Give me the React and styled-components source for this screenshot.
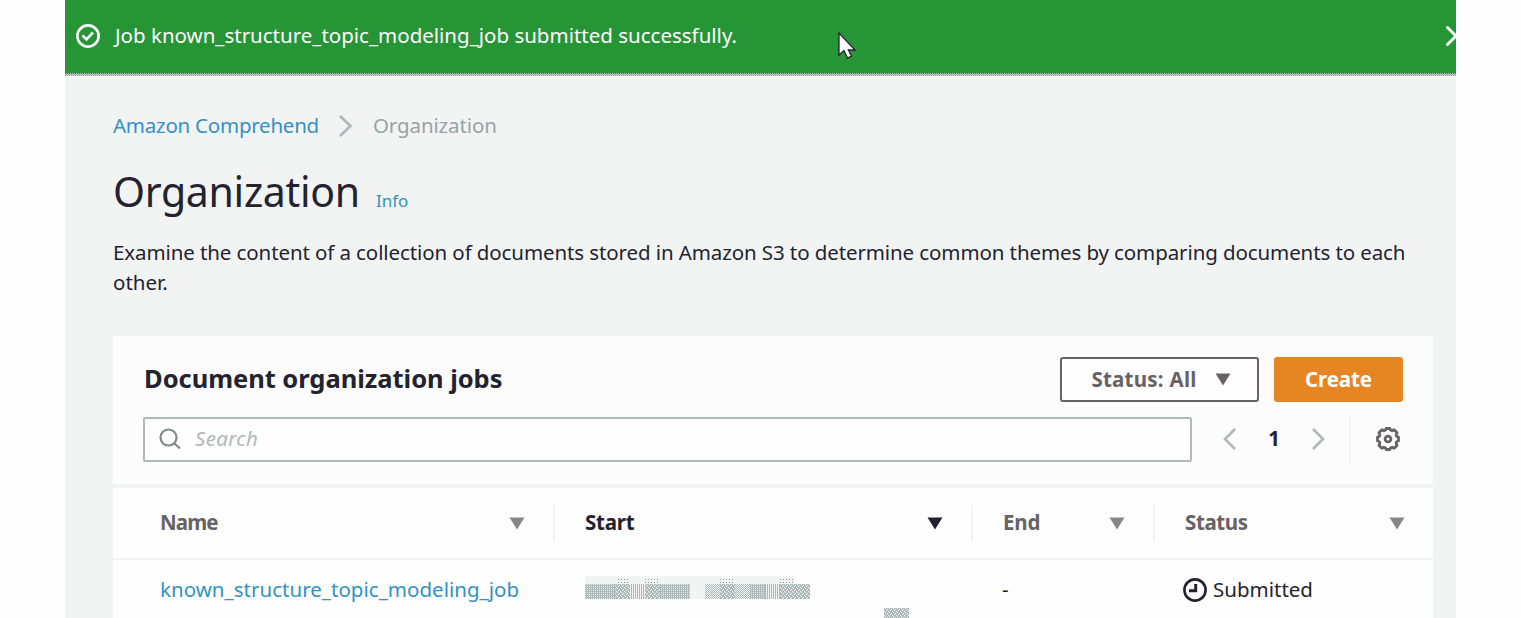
import React from "react";
import styled, { createGlobalStyle, css } from "styled-components";

const ink = "#232330";
const muted = "#686264";
const line = "#aeb9ba";
const pale = "#f2f4f4";
const blue = "#3292c5";

const GlobalStyle = createGlobalStyle`
  * { box-sizing: border-box; }
  html, body { margin: 0; height: 100%; overflow: hidden; background: #fefefe; }
  body {
    font-family: "Noto Sans", "Open Sans", sans-serif;
    font-size: 20.5px;
    line-height: 30px;
    color: ${ink};
  }
`;

const Shell = styled.div`
  width: 1391px;
  height: 618px;
  margin-left: 65px;
  overflow: hidden;
  background: ${pale};
`;

const Text = styled.span`
  display: block;
  white-space: nowrap;
  margin-bottom: ${(p) => p.$lift || 0}px;
  font-size: ${(p) => p.$size || 20.5}px;
  letter-spacing: ${(p) => p.$track || 0}px;
  color: ${(p) => p.$color || "inherit"};
  font-weight: ${(p) => p.$weight || 400};
  font-style: ${(p) => (p.$italic ? "italic" : "normal")};
`;

const Flash = styled.header`
  display: flex;
  align-items: center;
  height: 73px;
  padding-left: 11px;
  background: #269536;
  color: #fff;
  overflow: hidden;
  svg { flex: none; }
`;

const FlashMessage = styled.div`
  margin: -3px auto 0 15px;
`;

const FlashIcon = styled.svg`
  margin-top: -1px;
`;

const FlashClose = styled.svg`
  margin: -1px -11px 0 0;
`;

const FlashEdge = styled.div`
  height: 3px;
  background:
    linear-gradient(transparent 0 1px, ${line} 1px 2px, transparent 2px),
    linear-gradient(transparent 0 2px, rgba(242, 244, 244, 0.45) 2px),
    repeating-linear-gradient(90deg, #686264 0 1px, ${line} 1px 2px);
`;

const Pointer = styled.svg`
  position: absolute;
  left: 838px;
  top: 32px;
`;

const Page = styled.main`
  display: flex;
  flex-direction: column;
  padding: 35px 23px 0 48px;
`;

const Breadcrumbs = styled.nav`
  display: flex;
  align-items: center;
  height: 30px;
`;

const CrumbArrow = styled.svg`
  margin: 0 20px 0 19px;
`;

const TitleRow = styled.div`
  display: flex;
  align-items: baseline;
  gap: 16px;
  height: 62px;
  margin-top: 19px;
`;

const Title = styled.h1`
  margin: 0;
  font-weight: 400;
  line-height: 62px;
`;

const Description = styled.div`
  height: 114px;
  padding-top: 15px;
`;

const Panel = styled.section`
  display: flex;
  flex-direction: column;
`;

const PanelHeader = styled.div`
  height: 148px;
  padding: 21px 30px 0;
  background: #fcfcfc;
`;

const HeadRow = styled.div`
  display: flex;
  align-items: center;
  height: 45px;
  gap: 15px;
`;

const Heading = styled.h2`
  margin: 0 auto 0 1px;
`;

const Button = styled.button`
  display: flex;
  align-items: center;
  justify-content: center;
  gap: 18px;
  width: ${(p) => (p.$primary ? 129 : 199)}px;
  height: 45px;
  padding: 0 0 1px;
  font: inherit;
  border-radius: 3px;
  ${(p) =>
    p.$primary
      ? css`
          border: 0;
          background: #e58623;
          color: #fff;
        `
      : css`
          padding-left: 3px;
          border: 2px solid ${muted};
          background: #fefefe;
          color: ${muted};
        `}
`;

const FilterRow = styled.div`
  display: flex;
  align-items: center;
  height: 45px;
  margin-top: 15px;
`;

const SearchBox = styled.div`
  display: flex;
  align-items: center;
  gap: 14px;
  width: 1049px;
  height: 45px;
  padding: 0 0 2px 14px;
  border: 2px solid ${line};
  border-radius: 2px;
  background: #fefefe;
`;

const Pager = styled.div`
  display: flex;
  align-items: center;
  justify-content: space-between;
  width: 104px;
  height: 43px;
  margin: 0 0 2px 30px;
`;

const Rule = styled.div`
  width: 2px;
  height: ${(p) => p.$h}px;
  margin-left: ${(p) => p.$left || 0}px;
  background: ${pale};
`;

const GearIcon = styled.svg`
  margin: 0 0 2px 24px;
`;

const Table = styled.div`
  margin-top: 4px;
  background: #fefefe;
`;

const Row = styled.div`
  display: grid;
  grid-template-columns: 442px 418px 182px 278px;
  align-items: center;
  height: ${(p) => (p.$head ? 72 : 60)}px;
  border-bottom: ${(p) => (p.$head ? `2px solid ${pale}` : "0")};
`;

const HeadCell = styled.div`
  display: flex;
  align-items: center;
  justify-content: space-between;
  height: 36px;
  padding-left: ${(p) => p.$left}px;
  padding-right: ${(p) => p.$right}px;
  border-right: ${(p) => (p.$last ? "0" : `2px solid ${pale}`)};
`;

const Cell = styled.div`
  display: flex;
  align-items: center;
  gap: 6px;
  height: 60px;
  padding-left: ${(p) => p.$left}px;
`;

const Redacted = styled.svg`
  display: block;
  align-self: flex-start;
  margin-top: 16px;
`;

const Chevron = ({ flip }) => (
  <svg width="15" height="24" viewBox="0 0 15 24" fill="none" stroke={line} strokeWidth="2.6">
    <path d={flip ? "M13 2 3 12 13 22" : "M2 2 12 12 2 22"} />
  </svg>
);

const Caret = ({ color = "#858889" }) => (
  <svg width="16" height="13" viewBox="0 0 16 13" fill={color}>
    <path d="M.5.5h15L8 12.5z" />
  </svg>
);

const columns = [
  { label: "Name", left: 47, right: 28, track: -0.9 },
  { label: "Start", left: 30, right: 28, track: -0.2, sorted: true },
  { label: "End", left: 30, right: 28, track: -0.2 },
  { label: "Status", left: 30, right: 28, track: -0.4, last: true },
];

const maskBlocks = [
  [0, 8, 30, "a"], [30, 8, 15, "b"], [45, 8, 15, "s"], [60, 8, 15, "b"], [75, 8, 30, "a"],
  [120, 8, 15, "c"], [135, 8, 15, "b"], [150, 8, 15, "c"], [165, 8, 15, "a"],
  [180, 8, 15, "s"], [195, 8, 30, "b"],
];

const MaskedDate = () => (
  <Redacted width="325" height="42" viewBox="0 0 325 42" shapeRendering="crispEdges">
    <defs>
      <pattern id="a" width="2" height="2" patternUnits="userSpaceOnUse">
        <rect width="2" height="2" fill={line} />
        <rect width="1" height="1" fill="#e4e9e9" />
      </pattern>
      <pattern id="b" width="4" height="4" patternUnits="userSpaceOnUse">
        <rect width="4" height="4" fill={line} />
        <path d="M0 0h1v1H0zM2 1h1v1H2zM1 2h1v1H1zM3 3h1v1H3z" fill="#f5f7f7" />
      </pattern>
      <pattern id="c" width="2" height="2" patternUnits="userSpaceOnUse">
        <rect width="2" height="2" fill={pale} />
        <path d="M0 0h1v1H0zM1 1h1v1H1z" fill={line} />
      </pattern>
      <pattern id="s" width="2" height="2" patternUnits="userSpaceOnUse">
        <rect width="2" height="2" fill={pale} />
        <rect width="1" height="2" fill={line} />
      </pattern>
      <pattern id="d" width="3" height="3" patternUnits="userSpaceOnUse">
        <rect width="1" height="1" fill="#8d9899" />
      </pattern>
    </defs>
    <rect width="210" height="8" fill={pale} />
    <rect x="105" y="8" width="15" height="15" fill={pale} />
    <rect x="31" y="2" width="14" height="6" fill="url(#d)" />
    <rect x="60" y="2" width="15" height="6" fill="url(#d)" />
    <rect x="135" y="1" width="15" height="7" fill="url(#d)" />
    <rect x="195" y="2" width="14" height="6" fill="url(#d)" />
    {maskBlocks.map(([x, y, w, fill]) => (
      <rect key={x} x={x} y={y} width={w} height="15" fill={`url(#${fill})`} />
    ))}
    <rect x="299" y="32" width="25" height="10" fill="url(#b)" />
  </Redacted>
);

export default function App() {
  return (
    <>
      <GlobalStyle />
      <Shell>
        <Flash>
          <FlashIcon width="24" height="24" viewBox="0 0 24 24" fill="none" stroke="#fff" strokeWidth="2.6">
            <circle cx="12" cy="12" r="10.6" />
            <path d="m6.5 11.5 4 4 6.5-7" />
          </FlashIcon>
          <FlashMessage>
            <Text>Job known_structure_topic_modeling_job submitted successfully.</Text>
          </FlashMessage>
          <FlashClose width="22" height="22" viewBox="0 0 22 22" fill="none" stroke="#fff" strokeWidth="3" strokeLinecap="round">
            <path d="m2.5 2.5 17 17m0-17-17 17" />
          </FlashClose>
        </Flash>
        <FlashEdge />
        <Page>
          <Breadcrumbs>
            <Text $lift={2} $color={blue} $track={-0.24}>Amazon Comprehend</Text>
            <CrumbArrow width="15" height="24" viewBox="0 0 15 24" fill="none" stroke={line} strokeWidth="2.6">
              <path d="M2 2 12.5 12 2 22" />
            </CrumbArrow>
            <Text $lift={2} $color="#99a3a4" $track={-0.12}>Organization</Text>
          </Breadcrumbs>
          <TitleRow>
            <Title>
              <Text $size={41} $track={-0.3}>Organization</Text>
            </Title>
            <Text $size={17} $color={blue}>Info</Text>
          </TitleRow>
          <Description>
            <Text $track={-0.1}>Examine the content of a collection of documents stored in Amazon S3 to determine common themes by comparing documents to each</Text>
            <Text>other.</Text>
          </Description>
          <Panel>
            <PanelHeader>
              <HeadRow>
                <Heading>
                  <Text $lift={3} $size={25.5} $weight={700} $track={-0.04}>Document organization jobs</Text>
                </Heading>
                <Button>
                  <Text $lift={1} $weight={700} $track={0.25}>Status: All</Text>
                  <Caret color={muted} />
                </Button>
                <Button $primary>
                  <Text $lift={1} $weight={700} $track={-0.1}>Create</Text>
                </Button>
              </HeadRow>
              <FilterRow>
                <SearchBox>
                  <svg width="22" height="22" viewBox="0 0 22 22" fill="none" stroke="#7f8a8b" strokeWidth="2.2">
                    <circle cx="9.5" cy="9.5" r="8" />
                    <path d="m15.2 15.2 5.8 5.3" />
                  </svg>
                  <Text $lift={2} $italic $color={line} $track={0.35}>Search</Text>
                </SearchBox>
                <Pager>
                  <Chevron flip />
                  <Text $lift={1} $weight={700}>1</Text>
                  <Chevron />
                </Pager>
                <Rule $h={45} $left={23} />
                <GearIcon width="26" height="26" viewBox="0 0 26 26" fill="none" stroke={muted} strokeWidth="2.8">
                  <path strokeLinejoin="round" d="M10.6 4 11 2.5h4L15.4 4l1.8.8 1.9-1 3 3-1 1.9.7 1.8 1.7.5v4l-1.7.5-.7 1.8 1 1.9-3 3-1.9-1-1.8.8-.4 1.5h-4l-.4-1.5-1.8-.8-1.9 1-3-3 1-1.9-.7-1.8-1.7-.5v-4l1.7-.5.7-1.8-1-1.9 3-3 1.9 1z" />
                  <circle cx="13" cy="13" r="2.9" />
                </GearIcon>
              </FilterRow>
            </PanelHeader>
            <Table>
              <Row $head>
                {columns.map((c) => (
                  <HeadCell key={c.label} $left={c.left} $right={c.right} $last={c.last}>
                    <Text $lift={3} $weight={700} $track={c.track} $color={c.sorted ? ink : muted}>{c.label}</Text>
                    <Caret color={c.sorted ? ink : undefined} />
                  </HeadCell>
                ))}
              </Row>
              <Row>
                <Cell $left={47}>
                  <Text $lift={2} $color={blue} $track={0.03}>known_structure_topic_modeling_job</Text>
                </Cell>
                <Cell $left={30}>
                  <MaskedDate />
                </Cell>
                <Cell $left={29}>
                  <Text $lift={2}>-</Text>
                </Cell>
                <Cell $left={28}>
                  <svg width="24" height="24" viewBox="0 0 24 24" fill="none" stroke={ink} strokeWidth="2.6">
                    <circle cx="12" cy="12" r="10.6" />
                    <path d="M12.7 6v6.8H6" strokeWidth="3" />
                  </svg>
                  <Text $lift={2}>Submitted</Text>
                </Cell>
              </Row>
            </Table>
          </Panel>
        </Page>
      </Shell>
      <Pointer width="20" height="28" viewBox="0 0 20 28">
        <path d="M1 1v22l5-4.5L9.5 26l4-2-3.2-6H17z" fill="#fff" stroke={ink} strokeWidth="1.3" />
      </Pointer>
    </>
  );
}
